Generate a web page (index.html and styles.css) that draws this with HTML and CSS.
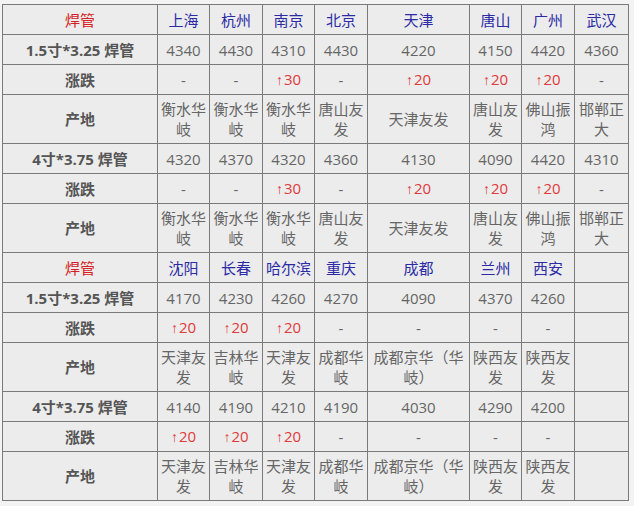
FILE: index.html
```html
<!DOCTYPE html>
<html lang="zh">
<head>
<meta charset="utf-8">
<link rel="stylesheet" href="styles.css">
</head>
<body>
<table class="price">
  <colgroup>
    <col class="c-label"><col class="c-n"><col class="c-n2"><col class="c-n"><col class="c-n2"><col class="c-wide"><col class="c-n"><col class="c-n2"><col class="c-last">
  </colgroup>
  <tr class="r1">
    <td class="title">焊管</td><td class="city">上海</td><td class="city">杭州</td><td class="city">南京</td><td class="city">北京</td><td class="city">天津</td><td class="city">唐山</td><td class="city">广州</td><td class="city">武汉</td>
  </tr>
  <tr class="r1">
    <td class="label">1.5寸*3.25 焊管</td><td>4340</td><td>4430</td><td>4310</td><td>4430</td><td>4220</td><td>4150</td><td>4420</td><td>4360</td>
  </tr>
  <tr class="r1">
    <td class="label">涨跌</td><td>-</td><td>-</td><td class="up"><span class="arrow">↑</span>30</td><td>-</td><td class="up"><span class="arrow">↑</span>20</td><td class="up"><span class="arrow">↑</span>20</td><td class="up"><span class="arrow">↑</span>20</td><td>-</td>
  </tr>
  <tr class="r2">
    <td class="label">产地</td><td>衡水华岐</td><td>衡水华岐</td><td>衡水华岐</td><td>唐山友发</td><td>天津友发</td><td>唐山友发</td><td>佛山振鸿</td><td>邯郸正大</td>
  </tr>
  <tr class="r1">
    <td class="label">4寸*3.75 焊管</td><td>4320</td><td>4370</td><td>4320</td><td>4360</td><td>4130</td><td>4090</td><td>4420</td><td>4310</td>
  </tr>
  <tr class="r1">
    <td class="label">涨跌</td><td>-</td><td>-</td><td class="up"><span class="arrow">↑</span>30</td><td>-</td><td class="up"><span class="arrow">↑</span>20</td><td class="up"><span class="arrow">↑</span>20</td><td class="up"><span class="arrow">↑</span>20</td><td>-</td>
  </tr>
  <tr class="r2">
    <td class="label">产地</td><td>衡水华岐</td><td>衡水华岐</td><td>衡水华岐</td><td>唐山友发</td><td>天津友发</td><td>唐山友发</td><td>佛山振鸿</td><td>邯郸正大</td>
  </tr>
  <tr class="r1">
    <td class="title">焊管</td><td class="city">沈阳</td><td class="city">长春</td><td class="city">哈尔滨</td><td class="city">重庆</td><td class="city">成都</td><td class="city">兰州</td><td class="city">西安</td><td></td>
  </tr>
  <tr class="r1">
    <td class="label">1.5寸*3.25 焊管</td><td>4170</td><td>4230</td><td>4260</td><td>4270</td><td>4090</td><td>4370</td><td>4260</td><td></td>
  </tr>
  <tr class="r1">
    <td class="label">涨跌</td><td class="up"><span class="arrow">↑</span>20</td><td class="up"><span class="arrow">↑</span>20</td><td class="up"><span class="arrow">↑</span>20</td><td>-</td><td>-</td><td>-</td><td>-</td><td></td>
  </tr>
  <tr class="r2">
    <td class="label">产地</td><td>天津友发</td><td>吉林华岐</td><td>天津友发</td><td>成都华岐</td><td>成都京华（华岐）</td><td>陕西友发</td><td>陕西友发</td><td></td>
  </tr>
  <tr class="r1">
    <td class="label">4寸*3.75 焊管</td><td>4140</td><td>4190</td><td>4210</td><td>4190</td><td>4030</td><td>4290</td><td>4200</td><td></td>
  </tr>
  <tr class="r1">
    <td class="label">涨跌</td><td class="up"><span class="arrow">↑</span>20</td><td class="up"><span class="arrow">↑</span>20</td><td class="up"><span class="arrow">↑</span>20</td><td>-</td><td>-</td><td>-</td><td>-</td><td></td>
  </tr>
  <tr class="r2">
    <td class="label">产地</td><td>天津友发</td><td>吉林华岐</td><td>天津友发</td><td>成都华岐</td><td>成都京华（华岐）</td><td>陕西友发</td><td>陕西友发</td><td></td>
  </tr>
</table>
</body>
</html>
```

FILE: styles.css
```css
html, body {
  margin: 0;
  padding: 0;
  background: #f3f3f3;
}
body {
  padding: 4px 0 0 2px;
  font-family: "Open Sans", "Noto Sans CJK SC", sans-serif;
}
.price {
  border-collapse: collapse;
  table-layout: fixed;
  width: 627px;
  background: #ececec;
  border: 1px solid #3a3a3a;
}
.c-label { width: 155px; }
.c-n { width: 52px; }
.c-n2 { width: 53px; }
.c-wide { width: 102px; }
.c-last { width: 54px; }
.price td {
  border: 1px solid #7a7a7a;
  padding: 0 3px;
  text-align: center;
  vertical-align: middle;
  font-size: 15px;
  line-height: 20px;
  color: #666;
  overflow: hidden;
}
.r1 td { height: 29px; }
.r2 td { height: 48px; }
.price td.title {
  color: #d42020;
}
.price td.city {
  color: #2b2ba6;
}
.price td.label {
  color: #555;
  font-weight: bold;
}
.price td.up {
  color: #e03a3a;
}
.arrow {
  font-family: "Liberation Sans", sans-serif;
  font-size: 14px;
  margin-right: 1px;
}
```
